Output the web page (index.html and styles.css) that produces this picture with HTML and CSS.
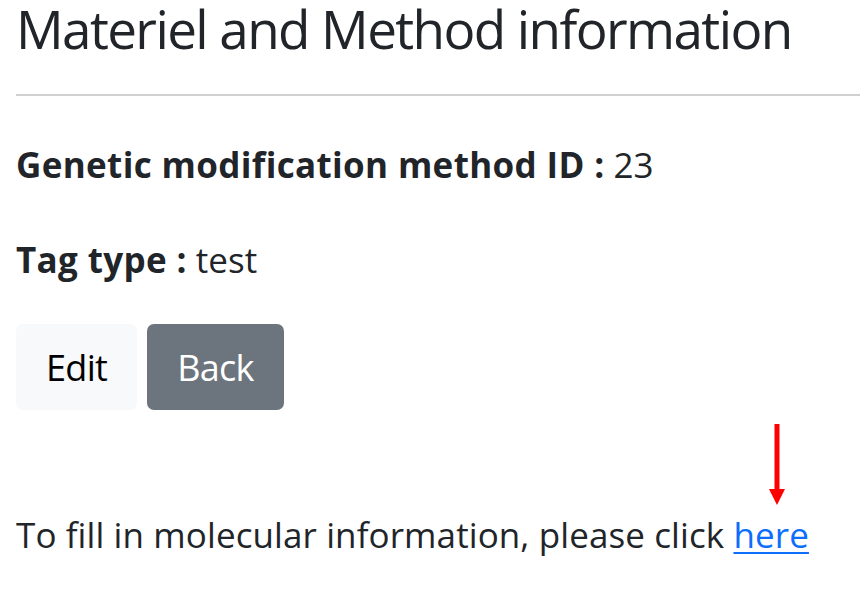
FILE: index.html
```html
<!DOCTYPE html>
<html lang="en">
<head>
<meta charset="utf-8">
<title>Materiel and Method information</title>
<link rel="stylesheet" href="styles.css">
</head>
<body>
<main class="page">
  <h1 class="title">Materiel and Method information</h1>
  <hr class="rule">
  <p class="field field-first"><strong>Genetic modification method ID :</strong> 23</p>
  <p class="field"><strong>Tag type :</strong> test</p>
  <div class="actions">
    <a class="btn btn-light" href="#">Edit</a>
    <a class="btn btn-secondary" href="#">Back</a>
  </div>
  <p class="note">To fill in molecular information, please click <a class="link" href="#">here<span class="arrow" aria-hidden="true"><svg width="16" height="81" viewBox="0 0 16 81"><rect x="5.5" y="0" width="5" height="67" fill="#ff0000"/><polygon points="0,65 16,65 8,81" fill="#ff0000"/></svg></span></a></p>
</main>
</body>
</html>
```
FILE: styles.css
```css
html, body {
  margin: 0;
  padding: 0;
  background: #ffffff;
}
body {
  font-family: "Open Sans", "Noto Sans", sans-serif;
  color: #212529;
  overflow: hidden;
}
.page {
  padding-left: 16px;
}
.title {
  margin: 0;
  padding-top: 2px;
  font-size: 53px;
  font-weight: 400;
  line-height: 1;
  letter-spacing: -1.6px;
  white-space: nowrap;
}
.rule {
  margin: 39px 0 0 0;
  border: 0;
  border-top: 2px solid #cfd0d1;
  height: 0;
}
.field {
  margin: 42px 0 0 0;
  font-size: 35px;
  line-height: 1.5;
  letter-spacing: 0;
}
.field-first {
  margin-top: 43px;
}
.field strong {
  font-weight: 700;
  letter-spacing: 0.35px;
}
.actions {
  display: flex;
  gap: 10px;
  margin-top: 38px;
}
.btn {
  display: flex;
  align-items: center;
  height: 86px;
  padding: 0 30px;
  border-radius: 7px;
  font-size: 36px;
  text-decoration: none;
  letter-spacing: -0.7px;
  box-sizing: border-box;
}
.btn-light {
  background: #f8f9fa;
  color: #000000;
}
.btn-secondary {
  background: #6c757d;
  color: #ffffff;
}
.note {
  margin: 99px 0 0 0;
  font-size: 35px;
  line-height: 1.5;
  letter-spacing: 0.1px;
}
.link {
  position: relative;
  color: #0d6efd;
  text-decoration: underline;
  text-decoration-thickness: 2px;
  text-underline-offset: 4px;
}
.arrow {
  position: absolute;
  left: 36px;
  bottom: 100%;
  margin-bottom: 6px;
  line-height: 0;
}
```
